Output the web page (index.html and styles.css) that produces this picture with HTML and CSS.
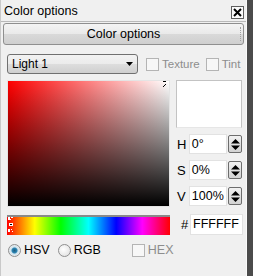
FILE: index.html
```html
<!DOCTYPE html>
<html>
<head>
<meta charset="utf-8">
<link rel="stylesheet" href="styles.css">
</head>
<body>
<div class="frame">
  <div class="main">
    <div class="titlebar">
      <span class="title">Color options</span>
      <span class="close"><svg width="9" height="9" viewBox="0 0 9 9"><path d="M1 1 L8 8 M8 1 L1 8" stroke="#000" stroke-width="2"/></svg></span>
    </div>
    <div class="bigbtn">Color options<span class="grip"></span></div>
    <div class="content">
      <div class="toolbar">
        <div class="select"><span>Light 1</span><svg class="arrow" width="7" height="4" viewBox="0 0 7 4"><path d="M0 0 H7 L3.5 4 Z" fill="#000"/></svg></div>
        <label class="check first"><span class="box"></span><span class="dim">Texture</span></label>
        <label class="check"><span class="box"></span><span class="dim">Tint</span></label>
      </div>
      <div class="pickrow">
        <div class="sv"><svg class="svmark" width="5" height="7" viewBox="0 0 5 7"><rect x="1" y="0" width="3" height="1" fill="#000"/><rect x="3" y="3" width="1" height="1" fill="#000"/><rect x="2" y="4" width="1" height="1" fill="#000"/><rect x="1" y="5" width="1" height="1" fill="#000"/></svg></div>
        <div class="side">
          <div class="preview"></div>
          <div class="field"><span class="lab">H</span><span class="inp">0°</span><span class="spin"><svg width="9" height="11" viewBox="0 0 9 11"><path d="M0 4.5 L4.5 0 L9 4.5 Z M0 6.5 H9 L4.5 11 Z" fill="#000"/></svg></span></div>
          <div class="field"><span class="lab">S</span><span class="inp">0%</span><span class="spin"><svg width="9" height="11" viewBox="0 0 9 11"><path d="M0 4.5 L4.5 0 L9 4.5 Z M0 6.5 H9 L4.5 11 Z" fill="#000"/></svg></span></div>
          <div class="field"><span class="lab">V</span><span class="inp">100%</span><span class="spin"><svg width="9" height="11" viewBox="0 0 9 11"><path d="M0 4.5 L4.5 0 L9 4.5 Z M0 6.5 H9 L4.5 11 Z" fill="#000"/></svg></span></div>
        </div>
      </div>
      <div class="huerow">
        <div class="hue"><svg class="huemark" width="6" height="20" viewBox="0 0 6 20"><rect x="0" y="2" width="2" height="3" fill="#fff"/><rect x="3" y="2" width="2" height="1" fill="#fff"/><rect x="2" y="4" width="1" height="1" fill="#fff"/><rect x="1" y="8" width="4" height="3" fill="#fff"/><rect x="2" y="9" width="2" height="1" fill="#000"/><rect x="0" y="14" width="2" height="3" fill="#fff"/><rect x="3" y="14" width="1" height="1" fill="#fff"/><rect x="4" y="16" width="1" height="1" fill="#fff"/></svg></div>
        <span class="hash">#</span>
        <span class="inp hex">FFFFFF</span>
      </div>
      <div class="radiorow">
        <label class="radio on"><span class="dot"></span>HSV</label>
        <label class="radio"><span class="dot"></span>RGB</label>
        <label class="check hexchk"><span class="box"></span><span class="dim">HEX</span></label>
      </div>
    </div>
  </div>
  <div class="edge"></div>
</div>
</body>
</html>
```
FILE: styles.css
```css
html, body {
  margin: 0;
  padding: 0;
}
body {
  width: 253px;
  height: 276px;
  overflow: hidden;
  background: #f0f0f0;
  font-family: "Liberation Sans", Arial, sans-serif;
  font-size: 12px;
  color: #000;
}
.frame {
  display: flex;
  height: 276px;
}
.main {
  width: 245px;
  border-left: 1px solid #c9c9c9;
  border-right: 1px solid #fafafa;
  background: #f0f0f0;
}
.edge {
  flex: 1;
  background: #4b4b4b;
}
.titlebar {
  height: 21px;
  border-bottom: 1px solid #b9b9b9;
  display: flex;
  align-items: center;
  justify-content: space-between;
  padding: 0 2px 0 3px;
}
.title {
  font-size: 12.5px;
  padding-top: 1px;
}
.close {
  width: 11px;
  height: 11px;
  border: 1px solid #5e5e5e;
  background: #fbfbfb;
  display: flex;
  align-items: center;
  justify-content: center;
  margin-top: 3px;
}
.bigbtn {
  position: relative;
  margin: 1px 2px 0 2px;
  height: 20px;
  border: 1px solid #8f8f8f;
  border-radius: 3px;
  background: linear-gradient(#f4f4f4, #e9e9e9 50%, #d9d9d9 51%, #cfcfcf);
  text-align: center;
  line-height: 20px;
  font-size: 12.5px;
}
.grip {
  position: absolute;
  right: 2px;
  top: 3px;
  height: 14px;
  border-right: 1px dotted #a0a0a0;
}
.content {
  padding-left: 6px;
}
.toolbar {
  display: flex;
  align-items: center;
  margin-top: 9px;
  height: 20px;
}
.select {
  height: 18px;
  border: 1px solid #707070;
  border-radius: 3px;
  background: linear-gradient(#f2f2f2, #ebebeb 50%, #dddddd 51%, #cfcfcf);
  display: flex;
  align-items: center;
  justify-content: space-between;
  padding: 0 4px 0 4px;
  box-sizing: content-box;
  width: 121px;
}
.check {
  display: flex;
  align-items: center;
  margin-left: 6px;
  font-size: 11.5px;
}
.check.first {
  margin-left: 8px;
}
.box {
  width: 11px;
  height: 11px;
  border: 1px solid #b4b4b4;
  background: #f7f7f7;
  margin-right: 3px;
}
.dim {
  color: #8d8d8d;
}
.pickrow {
  display: flex;
  margin-top: 6px;
}
.sv {
  position: relative;
  width: 161px;
  height: 125px;
  border: 1px solid #e4e4e4;
  background:
    linear-gradient(to bottom, rgba(0,0,0,0), #000),
    linear-gradient(to right, #ff0000, #ffffff);
}
.svmark {
  position: absolute;
  right: 2px;
  top: 0;
}
.side {
  margin-left: 6px;
  width: 66px;
}
.preview {
  height: 46px;
  border: 1px solid #c3c3c3;
  border-bottom-color: #e6e6e6;
  background: #fff;
}
.field {
  display: flex;
  align-items: center;
  margin-top: 6px;
  height: 20px;
}
.field:first-of-type {
  margin-top: 7px;
}
.lab {
  width: 12px;
  padding-left: 1px;
  font-size: 13px;
}
.inp {
  display: block;
  background: #fff;
  border: 1px solid #e2e2e2;
  height: 18px;
  line-height: 18px;
  padding-left: 2px;
  font-size: 12.5px;
}
.field .inp {
  width: 35px;
}
.spin {
  margin-left: 1px;
  width: 12px;
  height: 16px;
  border: 1px solid #6d6d6d;
  border-radius: 2px;
  background: linear-gradient(#f1f1f1, #d2d2d2);
  display: flex;
  align-items: center;
  justify-content: center;
}
.huerow {
  display: flex;
  align-items: center;
  margin-top: 7px;
  height: 21px;
}
.hue {
  position: relative;
  width: 163px;
  height: 18px;
  border-top: 2px solid #8a8a8a;
  background: linear-gradient(to right, #ff0000 0%, #ffff00 17%, #00ff00 33%, #00ffff 50%, #0000ff 67%, #ff00ff 83%, #ff0000 100%);
}
.huemark {
  position: absolute;
  left: 1px;
  top: -2px;
}
.hash {
  margin-left: 11px;
  width: 8px;
  font-size: 13px;
}
.hex {
  width: 49px;
  height: 19px;
  line-height: 19px;
  margin-left: 1px;
}
.radiorow {
  display: flex;
  align-items: center;
  margin-top: 8px;
  height: 14px;
  font-size: 12.5px;
}
.radio {
  display: flex;
  align-items: center;
  margin-right: 7px;
  margin-left: 1px;
}
.dot {
  width: 11px;
  height: 11px;
  border-radius: 50%;
  border: 1px solid #8f8f8f;
  background: radial-gradient(circle at 40% 40%, #ffffff, #dcdcdc);
  margin-right: 3px;
  box-sizing: content-box;
}
.radio.on .dot {
  background: radial-gradient(circle, #1c5c80 0, #2c86b4 2.5px, #cfe3ee 3.5px, #eeeeee 6px);
}
.check.hexchk {
  margin-left: 24px;
  font-size: 12.5px;
}
```
